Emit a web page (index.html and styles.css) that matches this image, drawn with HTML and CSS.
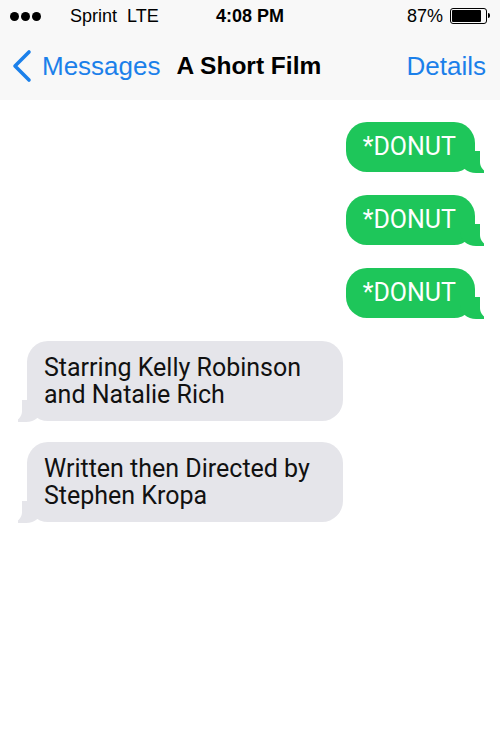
FILE: index.html
```html
<!DOCTYPE html>
<html lang="en">
<head>
    <meta charset="UTF-8">
    <meta name="viewport" content="width=device-width, initial-scale=1.0">
    <title>A Short Film</title>
    <link rel="stylesheet" href="styles.css">
</head>
<body>
    <header class="top">
        <div class="status-bar">
            <div class="carrier">
                <span class="signal"><i></i><i></i><i></i></span>
                <span>Sprint&nbsp;&nbsp;LTE</span>
            </div>
            <div class="clock">4:08 PM</div>
            <div class="power">
                <span>87%</span>
                <span class="battery"><span class="battery-level"></span></span>
            </div>
        </div>

        <nav class="nav-bar">
            <a class="back" href="#">
                <svg width="22" height="34" viewBox="0 0 22 34">
                    <polyline points="18,3 4,17 18,31" fill="none" stroke="#1b80ea" stroke-width="3.6" stroke-linecap="round" stroke-linejoin="round"/>
                </svg>
                Messages
            </a>
            <h1 class="title">A Short Film</h1>
            <a class="details" href="#">Details</a>
        </nav>
    </header>

    <main class="thread">
        <div class="bubble sent">*DONUT</div>
        <div class="bubble sent">*DONUT</div>
        <div class="bubble sent">*DONUT</div>
        <div class="bubble received">Starring Kelly Robinson and Natalie Rich</div>
        <div class="bubble received">Written then Directed by Stephen Kropa</div>
    </main>
</body>
</html>
```

FILE: styles.css
```css
body {
    margin: 0;
    background-color: #fff;
    font-family: "Liberation Sans", Arial, sans-serif;
    color: #000;
}

.top {
    background-color: #f8f8f8;
    height: 100px;
}

.status-bar {
    height: 32px;
    display: flex;
    align-items: center;
    justify-content: space-between;
    padding: 0 9px 0 10px;
    font-size: 18px;
    position: relative;
}

.carrier {
    display: flex;
    align-items: center;
    gap: 29px;
}

.signal {
    display: flex;
    gap: 2px;
}

.signal i {
    width: 9px;
    height: 9px;
    border-radius: 50%;
    background-color: #000;
}

.clock {
    font-weight: bold;
    position: absolute;
    left: 0;
    right: 0;
    text-align: center;
    pointer-events: none;
}

.power {
    display: flex;
    align-items: center;
    gap: 7px;
}

.battery {
    width: 33px;
    height: 12px;
    border: 1px solid #000;
    border-radius: 3px;
    padding: 1px;
    position: relative;
    margin-right: 4px;
}

.battery::after {
    content: "";
    position: absolute;
    right: -4px;
    top: 4px;
    width: 2px;
    height: 5px;
    background-color: #000;
    border-radius: 0 2px 2px 0;
}

.battery-level {
    display: block;
    width: 29px;
    height: 12px;
    background-color: #000;
    border-radius: 1px;
}

.nav-bar {
    height: 68px;
    display: flex;
    align-items: center;
    padding: 0 14px 0 11px;
}

.back {
    display: flex;
    align-items: center;
    gap: 9px;
    color: #1b80ea;
    text-decoration: none;
    font-size: 26px;
}

.title {
    margin: 0 0 0 16px;
    font-size: 24.5px;
    font-weight: bold;
    flex-grow: 1;
}

.details {
    color: #1b80ea;
    text-decoration: none;
    font-size: 26px;
}

.thread {
    display: flex;
    flex-direction: column;
    padding: 22px 25px;
}

.bubble {
    position: relative;
    font-family: Roboto, "Liberation Sans", sans-serif;
    font-size: 25px;
    line-height: 27px;
    border-radius: 21px;
}

.sent {
    align-self: flex-end;
    background-color: #1ec65a;
    color: #fff;
    padding: 11px 19px 12px 17px;
    margin-bottom: 23px;
}

.received {
    align-self: flex-start;
    width: 282px;
    background-color: #e5e5ea;
    color: #111;
    padding: 13px 17px 13px 17px;
    margin-left: 2px;
    margin-bottom: 21px;
}

/* tails: a coloured corner piece, carved by a white one */
.sent::before,
.received::before {
    content: "";
    position: absolute;
    bottom: -1px;
    width: 24px;
    height: 22px;
}

.sent::before {
    right: -9px;
    background-color: #1ec65a;
    border-bottom-left-radius: 16px 14px;
}

.received::before {
    left: -9px;
    background-color: #e5e5ea;
    border-bottom-right-radius: 16px 14px;
}

.sent::after,
.received::after {
    content: "";
    position: absolute;
    bottom: -1px;
    width: 26px;
    height: 24px;
    background-color: #fff;
}

.sent::after {
    right: -31px;
    border-bottom-left-radius: 11px;
}

.received::after {
    left: -31px;
    border-bottom-right-radius: 11px;
}
```
